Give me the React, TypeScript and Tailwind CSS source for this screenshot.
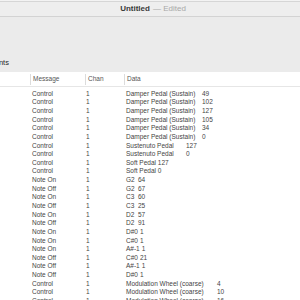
import React from "react";

type Row = {
  msg: string;
  data: string;
  value?: string;
  w?: string;
};

const note = "min-w-[10px] mr-[2px]";

const rows: Row[] = [
  { msg: "Control", data: "Damper Pedal (Sustain)", value: "49", w: "w-[76px]" },
  { msg: "Control", data: "Damper Pedal (Sustain)", value: "102", w: "w-[76px]" },
  { msg: "Control", data: "Damper Pedal (Sustain)", value: "127", w: "w-[76px]" },
  { msg: "Control", data: "Damper Pedal (Sustain)", value: "105", w: "w-[76px]" },
  { msg: "Control", data: "Damper Pedal (Sustain)", value: "34", w: "w-[76px]" },
  { msg: "Control", data: "Damper Pedal (Sustain)", value: "0", w: "w-[76px]" },
  { msg: "Control", data: "Sustenuto Pedal", value: "127", w: "w-[60px]" },
  { msg: "Control", data: "Sustenuto Pedal", value: "0", w: "w-[60px]" },
  { msg: "Control", data: "Soft Pedal 127" },
  { msg: "Control", data: "Soft Pedal 0" },
  { msg: "Note On", data: "G2", value: "64", w: note },
  { msg: "Note Off", data: "G2", value: "67", w: note },
  { msg: "Note On", data: "C3", value: "60", w: note },
  { msg: "Note Off", data: "C3", value: "25", w: note },
  { msg: "Note On", data: "D2", value: "57", w: note },
  { msg: "Note Off", data: "D2", value: "91", w: note },
  { msg: "Note On", data: "D#0", value: "1", w: note },
  { msg: "Note On", data: "C#0", value: "1", w: note },
  { msg: "Note On", data: "A#-1", value: "1", w: note },
  { msg: "Note Off", data: "C#0", value: "21", w: note },
  { msg: "Note Off", data: "A#-1", value: "1", w: note },
  { msg: "Note Off", data: "D#0", value: "1", w: note },
  { msg: "Control", data: "Modulation Wheel (coarse)", value: "4", w: "w-[91px]" },
  { msg: "Control", data: "Modulation Wheel (coarse)", value: "10", w: "w-[91px]" },
  { msg: "Control", data: "Modulation Wheel (coarse)", value: "16", w: "w-[91px]" },
];

export default function App() {
  return (
    <div className="w-[300px] h-[300px] overflow-hidden bg-white font-['Liberation_Sans',Arial,sans-serif]">
      {/* title bar */}
      <div className="h-px bg-[#f3f3f3]" />
      <div className="h-px bg-[#d6d6d6]" />
      <div className="h-[14px] bg-[#eeeeee] flex items-center justify-center text-[8px] leading-none">
        <span className="font-bold text-[#3a3a3a] ml-[6px]">Untitled</span>
        <span className="text-[#a8a8a8] ml-[3px]">— Edited</span>
      </div>
      <div className="h-px bg-[#d3d3d3]" />

      {/* toolbar */}
      <div className="h-[55px] bg-[#ebebeb] flex items-end overflow-hidden">
        <span className="text-[7.5px] leading-none text-[#2a2a2a] -ml-[14px] mb-[6px]">Events</span>
      </div>

      {/* table header */}
      <div className="h-[15px] flex items-center border-b border-[#e6e6e6] text-[6.5px] leading-none text-[#555]">
        <div className="w-[30px]" />
        <div className="w-[55px] h-[11px] border-l border-[#dcdcdc] pl-[2px] flex items-center">Message</div>
        <div className="w-[39px] h-[11px] border-l border-[#dcdcdc] pl-[2px] flex items-center">Chan</div>
        <div className="flex-1 h-[11px] border-l border-[#dcdcdc] pl-[2px] flex items-center">Data</div>
      </div>

      {/* rows */}
      <div className="pt-[2.6px] text-[6.5px] text-[#444]">
        {rows.map((r, i) => (
          <div key={i} className="h-[8.65px] flex items-center leading-none whitespace-nowrap">
            <div className="w-[32px] shrink-0" />
            <div className="w-[54px] shrink-0">{r.msg}</div>
            <div className="w-[40px] shrink-0">1</div>
            <div className="flex">
              <span className={`shrink-0 ${r.w ?? ""}`}>{r.data}</span>
              {r.value && <span>{r.value}</span>}
            </div>
          </div>
        ))}
      </div>
    </div>
  );
}
